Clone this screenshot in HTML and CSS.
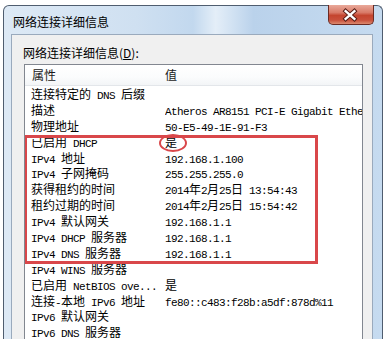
FILE: index.html
```html
<!DOCTYPE html>
<html lang="zh-CN">
<head>
<meta charset="utf-8">
<title>网络连接详细信息</title>
<link rel="stylesheet" href="styles.css">
</head>
<body>
<div class="window">
  <div class="titlebar">
    <span class="title">网络连接详细信息</span>
    <div class="close">
      <svg width="46" height="20" viewBox="0 0 46 20">
        <path d="M18 6 L27 14 M27 6 L18 14" stroke="#5a1e16" stroke-width="4.4" stroke-linecap="square" fill="none"/>
        <path d="M18 6 L27 14 M27 6 L18 14" stroke="#ffffff" stroke-width="2.4" stroke-linecap="square" fill="none"/>
      </svg>
    </div>
  </div>
  <div class="client">
    <div class="caption">网络连接详细信息(<u>D</u>):</div>
    <div class="list">
      <div class="head"><span class="c1">属性</span><span class="c2">值</span></div>
      <div class="row"><span class="c1">连接特定的<span class="m"> DNS </span>后缀</span><span class="c2"></span></div>
      <div class="row"><span class="c1">描述</span><span class="c2"><span class="m">Atheros AR8151 PCI-E Gigabit Ethe</span></span></div>
      <div class="row"><span class="c1">物理地址</span><span class="c2"><span class="m">50-E5-49-1E-91-F3</span></span></div>
      <div class="row"><span class="c1">已启用<span class="m"> DHCP</span></span><span class="c2">是</span></div>
      <div class="row"><span class="c1"><span class="m">IPv4 </span>地址</span><span class="c2"><span class="m">192.168.1.100</span></span></div>
      <div class="row"><span class="c1"><span class="m">IPv4 </span>子网掩码</span><span class="c2"><span class="m">255.255.255.0</span></span></div>
      <div class="row"><span class="c1">获得租约的时间</span><span class="c2"><span class="m">2014</span>年<span class="m">2</span>月<span class="m">25</span>日<span class="m"> 13:54:43</span></span></div>
      <div class="row"><span class="c1">租约过期的时间</span><span class="c2"><span class="m">2014</span>年<span class="m">2</span>月<span class="m">25</span>日<span class="m"> 15:54:42</span></span></div>
      <div class="row"><span class="c1"><span class="m">IPv4 </span>默认网关</span><span class="c2"><span class="m">192.168.1.1</span></span></div>
      <div class="row"><span class="c1"><span class="m">IPv4 DHCP </span>服务器</span><span class="c2"><span class="m">192.168.1.1</span></span></div>
      <div class="row"><span class="c1"><span class="m">IPv4 DNS </span>服务器</span><span class="c2"><span class="m">192.168.1.1</span></span></div>
      <div class="row"><span class="c1"><span class="m">IPv4 WINS </span>服务器</span><span class="c2"></span></div>
      <div class="row"><span class="c1">已启用<span class="m"> NetBIOS ove...</span></span><span class="c2">是</span></div>
      <div class="row"><span class="c1">连接<span class="m">-</span>本地<span class="m"> IPv6 </span>地址</span><span class="c2"><span class="m">fe80::c483:f28b:a5df:878d%11</span></span></div>
      <div class="row"><span class="c1"><span class="m">IPv6 </span>默认网关</span><span class="c2"></span></div>
      <div class="row"><span class="c1"><span class="m">IPv6 DNS </span>服务器</span><span class="c2"></span></div>
      <div class="mark"></div>
      <div class="oval"></div>
    </div>
  </div>
</div>
</body>
</html>
```

FILE: styles.css
```css
html, body {
  margin: 0;
  padding: 0;
  background: #ffffff;
  overflow: hidden;
}

body {
  width: 385px;
  height: 339px;
  font-family: "Noto Sans CJK SC", sans-serif;
  font-size: 12px;
  color: #000;
}

.window {
  margin: 5px 0 0 3px;
  width: 380px;
  height: 340px;
  box-sizing: border-box;
  border: 1px solid #4f5d6f;
  border-bottom: none;
  border-radius: 6px 6px 0 0;
  background: linear-gradient(to right, #dde9f5 0%, #cfe0f1 35%, #c2d8ee 50%, #e4eef8 56%, #bad2eb 66%, #c6dbf0 100%);
  display: flex;
  flex-direction: column;
}

.titlebar {
  height: 28px;
  display: flex;
  align-items: flex-start;
  padding-left: 9px;
  flex: none;
}

.title {
  margin-top: 8px;
  line-height: 16px;
  font-size: 12px;
  color: #000;
}

.close {
  margin-left: auto;
  margin-right: 8px;
  margin-top: -1px;
  width: 46px;
  height: 20px;
  box-sizing: border-box;
  border: 1px solid #6b2a22;
  border-top: none;
  border-radius: 0 0 5px 5px;
  background: linear-gradient(to bottom, #e9a99a 0%, #d87a68 40%, #c4452f 55%, #c9513c 80%, #dc8a6f 100%);
  display: flex;
  align-items: center;
  justify-content: center;
  overflow: hidden;
}

.close svg {
  display: block;
  margin-left: -1px;
}

.client {
  flex: 1;
  margin: 0 9px 0 7px;
  border: 1px solid #9aaabd;
  border-bottom: none;
  background: #f0f0f0;
  min-height: 0;
}

.caption {
  margin: 10px 0 0 11px;
  line-height: 16px;
  font-size: 12px;
}

.list {
  position: relative;
  margin: 3px 0 0 12px;
  width: 339px;
  height: 300px;
  box-sizing: border-box;
  border: 1px solid #828790;
  background: #ffffff;
  overflow: hidden;
}

.head {
  display: grid;
  grid-template-columns: 140px 1fr;
  height: 20px;
  line-height: 20px;
  border-bottom: 1px solid #e3e6ea;
  background: linear-gradient(to bottom, #ffffff 0%, #fbfcfd 60%, #f3f5f7 100%);
  color: #1a1a1a;
}

.head .c1 {
  padding-left: 7px;
}

.row {
  display: grid;
  grid-template-columns: 140px 1fr;
  height: 15.9px;
  line-height: 15.9px;
  white-space: nowrap;
}

.c1 {
  padding-left: 6px;
  overflow: hidden;
  white-space: nowrap;
}

.c2 {
  overflow: hidden;
  white-space: nowrap;
}

.m {
  font-family: "Liberation Mono", monospace;
  font-size: 11px;
  letter-spacing: -0.6px;
}

.mark {
  position: absolute;
  left: -1px;
  top: 70px;
  width: 294px;
  height: 129px;
  box-sizing: border-box;
  border: 3px solid #d9474a;
}

.oval {
  position: absolute;
  left: 134px;
  top: 69px;
  width: 28px;
  height: 18px;
  box-sizing: border-box;
  border: 2px solid #d9474a;
  border-radius: 50%;
}
```
